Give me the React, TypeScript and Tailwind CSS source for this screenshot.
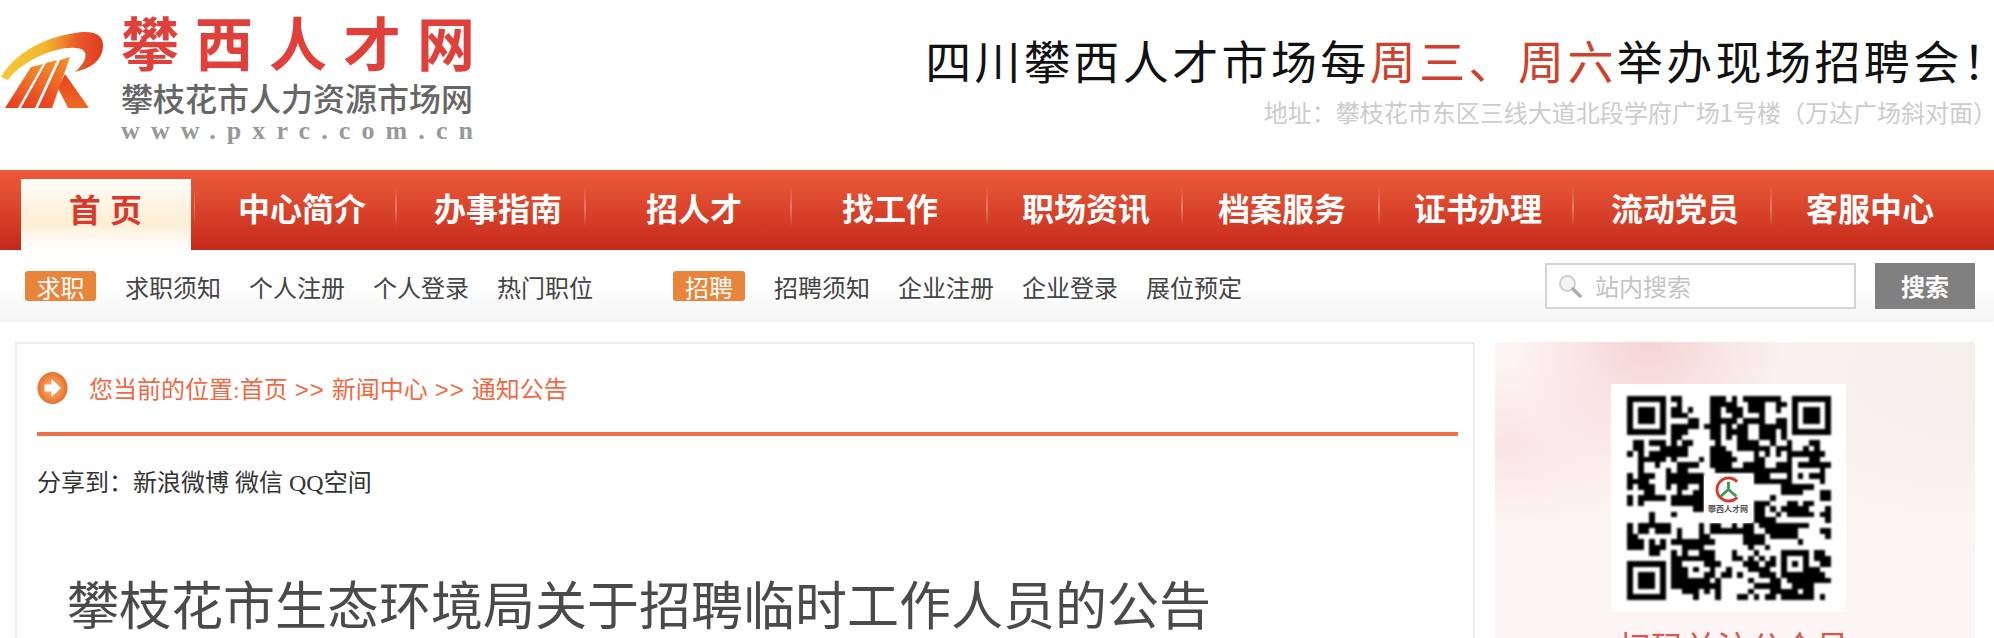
const navItems = [
  { label: "中心简介", cls: "w-[202px] pl-[43px]" },
  { label: "办事指南", cls: "w-[189px] pl-[37px]" },
  { label: "招人才", cls: "w-[206px] pl-[60px]" },
  { label: "找工作", cls: "w-[196px] pl-[50px]" },
  { label: "职场资讯", cls: "w-[195px] pl-[34px]" },
  { label: "档案服务", cls: "w-[197px] pl-[35px]" },
  { label: "证书办理", cls: "w-[194px] pl-[34px]" },
  { label: "流动党员", cls: "w-[198px] pl-[37px]" },
];

const NavDivider = () => (
  <span className="ml-auto h-[40px] w-[2px] shrink-0 bg-gradient-to-b from-transparent via-white/30 to-transparent" />
);

const Logo = () => (
  <svg viewBox="0 0 110 120" className="h-[120px] w-[110px] shrink-0 blur-[0.5px]">
    <defs>
      <linearGradient id="swoosh" x1="0" y1="0" x2="1" y2="0">
        <stop offset="0" stopColor="#f4c93a" />
        <stop offset="0.45" stopColor="#f3b42c" />
        <stop offset="0.75" stopColor="#ea5a28" />
        <stop offset="1" stopColor="#e03a22" />
      </linearGradient>
      <linearGradient id="bars" x1="0" y1="1" x2="1" y2="0">
        <stop offset="0" stopColor="#e8351f" />
        <stop offset="1" stopColor="#f2952c" />
      </linearGradient>
      <linearGradient id="leg" x1="0" y1="0" x2="0" y2="1">
        <stop offset="0" stopColor="#e8401f" />
        <stop offset="1" stopColor="#ee6a24" />
      </linearGradient>
    </defs>
    <path
      d="M1 77C14 54 44 36 82 32C97 31 104 37 103 47C102 60 92 68 75 72C84 64 88 56 84 51C78 45 58 48 42 55C28 61 16 69 8 80Z"
      fill="url(#swoosh)"
    />
    <path d="M5 108L31 67L43 64L18 108Z" fill="url(#bars)" />
    <path d="M21 108L46 63L57 60L35 108Z" fill="url(#bars)" />
    <path d="M38 108L60 60L70 57L52 108Z" fill="url(#bars)" />
    <path d="M65 74L89 108L68 108L58 88Z" fill="url(#leg)" />
  </svg>
);

// fixed pseudo random modules, neighbours are copied now and then so they clump like the real code
const QR_SIZE = 37;
const qrCells = (() => {
  const cells: [number, number][] = [];
  const grid: boolean[][] = [];
  let seed = 20231;
  const next = () => {
    seed = (seed * 1103515245 + 12345) & 0x7fffffff;
    return (seed >> 16) % 100;
  };
  for (let y = 0; y < QR_SIZE; y++) {
    grid[y] = [];
    for (let x = 0; x < QR_SIZE; x++) {
      const roll = next();
      let on = next() < 54;
      if (roll < 25 && x > 0) on = grid[y][x - 1];
      else if (roll < 45 && y > 0) on = grid[y - 1][x];
      grid[y][x] = on;
      const inFinder = (x < 8 && y < 8) || (x > 28 && y < 8) || (x < 8 && y > 28);
      const inHole = x > 13 && x < 23 && y > 13 && y < 23;
      const inAlign = x > 26 && x < 33 && y > 26 && y < 33;
      if (on && !inFinder && !inHole && !inAlign) cells.push([x, y]);
    }
  }
  return cells;
})();

const Finder = ({ x, y }: { x: number; y: number }) => (
  <g>
    <rect x={x} y={y} width="7" height="7" fill="#000" />
    <rect x={x + 1} y={y + 1} width="5" height="5" fill="#fff" />
    <rect x={x + 2} y={y + 2} width="3" height="3" fill="#000" />
  </g>
);

const QrCode = () => (
  <div className="relative h-[204px] w-[204px]">
    <svg viewBox="0 0 37 37" className="h-full w-full blur-[0.8px]" shapeRendering="crispEdges">
      {qrCells.map(([x, y]) => (
        <rect key={`${x}-${y}`} x={x} y={y} width="1" height="1" fill="#000" />
      ))}
      <Finder x={0} y={0} />
      <Finder x={30} y={0} />
      <Finder x={0} y={30} />
      <rect x="28" y="28" width="5" height="5" fill="#000" />
      <rect x="29" y="29" width="3" height="3" fill="#fff" />
      <rect x="30" y="30" width="1" height="1" fill="#000" />
    </svg>
    <div className="absolute left-[77px] top-[78px] flex h-[49px] w-[49px] flex-col items-center rounded-[4px] bg-white pt-[2px]">
      <svg viewBox="0 0 28 28" className="h-[27px] w-[27px]">
        <path d="M23 6A12 12 0 1 0 23 22" fill="none" stroke="#d8392e" strokeWidth="3" />
        <path d="M14 6V14M14 14L6 21M14 14L22 21" fill="none" stroke="#3f9a55" strokeWidth="3" />
      </svg>
      <span className="mt-[2px] whitespace-nowrap text-[8px] font-bold leading-[10px] text-[#555]">攀西人才网</span>
    </div>
  </div>
);

export default function App() {
  return (
    <div className="h-[638px] w-[1994px] overflow-hidden bg-white font-['Liberation_Serif','Noto_Sans_CJK_SC',serif]">
      {/* top banner */}
      <header className="flex h-[170px]">
        <Logo />
        <div className="ml-[11px] flex flex-col pt-[9px]">
          <div className="whitespace-nowrap font-['Noto_Sans_CJK_SC',sans-serif] text-[58px] font-bold leading-[64px] tracking-[16px] text-[#e0403a]">
            攀西人才网
          </div>
          <div className="mt-[9px] whitespace-nowrap text-[32px] font-medium leading-[36px] text-[#666]">攀枝花市人力资源市场网</div>
          <div className="-mt-[2px] whitespace-nowrap text-[26px] font-bold leading-[30px] tracking-[11.1px] text-[#999]">
            www.pxrc.com.cn
          </div>
        </div>
        <div className="ml-auto flex flex-col items-end pt-[29px] font-['Noto_Sans_CJK_SC',sans-serif]">
          <div className="mr-[5px] whitespace-nowrap text-[46px] leading-[60px] tracking-[3.4px] text-[#111]">
            四川攀西人才市场每<span className="text-[#d0402a]">周三、周六</span>举办现场招聘会
            <span className="[font-feature-settings:'halt']">！</span>
          </div>
          <div className="mr-[9px] mt-[7px] whitespace-nowrap text-[24px] leading-[32px] text-[#ccc]">
            地址：攀枝花市东区三线大道北段学府广场1号楼（万达广场斜对面
            <span className="[font-feature-settings:'halt']">）</span>
          </div>
        </div>
      </header>

      {/* main nav */}
      <nav className="flex h-[80px] items-center bg-gradient-to-b from-[#ec5b3a] to-[#c5281a] pb-[6px] pl-[21px] font-['Noto_Sans_CJK_SC',sans-serif] text-[32px] font-bold text-white">
        <a className="mt-[15px] flex h-[71px] w-[170px] shrink-0 items-center justify-center bg-gradient-to-b from-[#fffdfa] via-[#fdeed4] via-60% to-white pb-[13px] tracking-[1px] text-[#d9382a]">
          首 页
        </a>
        <span className="ml-[3px] h-[40px] w-[1px] shrink-0 bg-gradient-to-b from-transparent via-white/30 to-transparent" />
        {navItems.map((item) => (
          <a key={item.label} className={`flex shrink-0 items-center whitespace-nowrap ${item.cls}`}>
            {item.label}
            <NavDivider />
          </a>
        ))}
        <a className="whitespace-nowrap pl-[34px]">客服中心</a>
      </nav>

      {/* sub nav */}
      <div className="flex h-[72px] items-center bg-gradient-to-b from-white from-50% to-[#f4f4f4] pl-[25px] pr-[19px] text-[24px] text-[#444]">
        <span className="h-[30px] w-[71px] shrink-0 overflow-hidden rounded-[3px] bg-[#e8853a] text-center leading-[36px] text-white">求职</span>
        <div className="ml-[29px] mt-[5px] flex gap-[28px] whitespace-nowrap">
          <a>求职须知</a>
          <a>个人注册</a>
          <a>个人登录</a>
          <a>热门职位</a>
        </div>
        <span className="ml-[80px] h-[30px] w-[72px] shrink-0 overflow-hidden rounded-[3px] bg-[#e8853a] text-center leading-[36px] text-white">招聘</span>
        <div className="ml-[29px] mt-[5px] flex gap-[28px] whitespace-nowrap">
          <a>招聘须知</a>
          <a>企业注册</a>
          <a>企业登录</a>
          <a>展位预定</a>
        </div>
        <div className="ml-auto flex h-[46px] w-[311px] items-center border-2 border-[#d4d4d4] bg-white pl-[11px] text-[#c4c4c4]">
          <svg viewBox="0 0 24 24" className="h-[24px] w-[24px]">
            <circle cx="9.5" cy="9.5" r="7.5" fill="#f4f4f4" stroke="#cfcfcf" strokeWidth="2" />
            <path d="M15 15L22 22" stroke="#aaa" strokeWidth="3.5" strokeLinecap="round" />
          </svg>
          <span className="ml-[13px] font-['Noto_Sans_CJK_SC',sans-serif]">站内搜索</span>
        </div>
        <button className="ml-[19px] h-[46px] w-[100px] bg-[#808080] font-['Noto_Sans_CJK_SC',sans-serif] font-bold text-white">搜索</button>
      </div>

      {/* content */}
      <main className="flex pl-[15px] pt-[20px]">
        <section className="h-[320px] w-[1460px] shrink-0 border-2 border-[#eee] pl-[20px] pr-[15px] pt-[28px]">
          <div className="flex h-[32px] items-center text-[24px] text-[#ee6a45]">
            <svg viewBox="0 0 30 32" className="h-[32px] w-[31px] blur-[0.5px]">
              <defs>
                <radialGradient id="dot" cx="0.5" cy="0.5" r="0.55">
                  <stop offset="0.3" stopColor="#f7a25a" />
                  <stop offset="1" stopColor="#e4682a" />
                </radialGradient>
              </defs>
              <ellipse cx="15" cy="16" rx="15" ry="16" fill="url(#dot)" />
              <path d="M7 12.5H14V7L23.5 16L14 25V19.5H7Z" fill="#fff" />
            </svg>
            <span className="ml-[21px] mt-[4px] whitespace-nowrap">
              您当前的位置:首页 <span className="mx-[1px] font-['Liberation_Sans',sans-serif] tracking-[1px]">&gt;&gt;</span> 新闻中心{" "}
              <span className="mx-[1px] font-['Liberation_Sans',sans-serif] tracking-[1px]">&gt;&gt;</span> 通知公告
            </span>
          </div>
          <div className="mt-[28px] h-[4px] bg-[#f0704a]" />
          <div className="mt-[35px] whitespace-nowrap text-[24px] leading-[24px] text-[#333]">
            分享到：<span>新浪微博 微信 QQ空间</span>
          </div>
          <h1 className="ml-[30px] mt-[78px] whitespace-nowrap font-['Noto_Sans_CJK_SC',sans-serif] text-[52px] font-normal leading-[60px] text-[#4a4a4a]">
            攀枝花市生态环境局关于招聘临时工作人员的公告
          </h1>
        </section>

        <aside className="ml-[20px] flex h-[296px] w-[480px] shrink-0 flex-col items-start overflow-hidden bg-[#fdf5f5] bg-[radial-gradient(ellipse_at_32%_0%,#f6d3d3_0%,transparent_30%),radial-gradient(ellipse_at_0%_35%,#fae4e4_0%,transparent_32%),radial-gradient(ellipse_at_100%_10%,#f3efe9_0%,transparent_50%)] pl-[116px] pt-[42px]">
          <div className="flex h-[228px] w-[235px] shrink-0 items-center justify-center bg-white">
            <QrCode />
          </div>
          <div className="ml-[7px] mt-[14px] whitespace-nowrap font-['Noto_Sans_CJK_SC',sans-serif] text-[33px] leading-[40px] text-[#d9574a]">扫码关注公众号</div>
        </aside>
      </main>
    </div>
  );
}
